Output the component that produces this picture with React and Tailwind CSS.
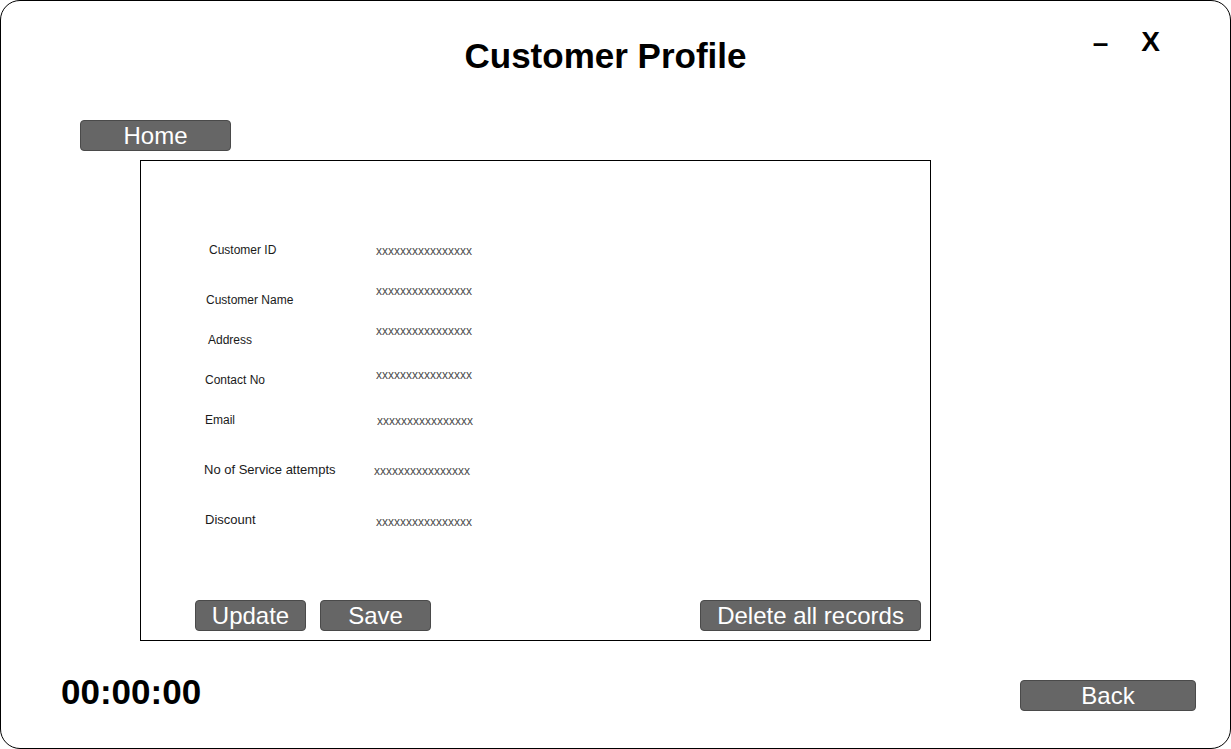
import React from 'react';

const font = { fontFamily: '"Liberation Sans", Arial, sans-serif' };

const rows = [
  { label: 'Customer ID', h: 'h-[50px]', lp: 'pl-[68px]', ls: 'text-[12px]', vp: 'pl-0', vm: 'mt-[1px]' },
  { label: 'Customer Name', h: 'h-[40px]', lp: 'pl-[65px]', ls: 'text-[12px]', vp: 'pl-0', vm: 'mt-[-9px]' },
  { label: 'Address', h: 'h-[40px]', lp: 'pl-[67px]', ls: 'text-[12px]', vp: 'pl-0', vm: 'mt-[-9px]' },
  { label: 'Contact No', h: 'h-[40px]', lp: 'pl-[64px]', ls: 'text-[12px]', vp: 'pl-0', vm: 'mt-[-5px]' },
  { label: 'Email', h: 'h-[50px]', lp: 'pl-[64px]', ls: 'text-[12px]', vp: 'pl-[1px]', vm: 'mt-[1px]' },
  { label: 'No of Service attempts', h: 'h-[50px]', lp: 'pl-[63px]', ls: 'text-[13px]', vp: 'ml-[-2px]', vm: 'mt-[1px]' },
  { label: 'Discount', h: 'h-[16px]', lp: 'pl-[64px]', ls: 'text-[13px]', vp: 'pl-0', vm: 'mt-[2px]' },
];

const GrayButton = ({ children, className = '' }) => (
  <button
    className={`h-[31px] rounded-[4px] border border-[#4a4a4a] bg-[#666666] text-[24px] leading-[29px] text-white ${className}`}
    style={font}
  >
    {children}
  </button>
);

const App = () => {
  return (
    <div className="h-[749px] w-[1231px] bg-white" style={font}>
      <div className="relative flex h-[749px] w-[1231px] flex-col rounded-[20px] border border-black">
        {/* Header */}
        <div className="flex justify-center pr-[20px] pt-[35px]">
          <h1 className="text-[35px] font-bold leading-[40px] text-black">Customer Profile</h1>
        </div>
        <div className="absolute right-[70px] top-[24px] flex items-center gap-[33px] text-[28px] font-bold leading-[32px] text-black">
          <span className="mt-[2px]">–</span>
          <span>X</span>
        </div>

        {/* Home */}
        <div className="ml-[79px] mt-[44px]">
          <GrayButton className="w-[151px]">Home</GrayButton>
        </div>

        {/* Panel */}
        <div className="ml-[139px] mt-[9px] flex h-[481px] w-[791px] flex-col border border-black">
          <div className="flex flex-col pt-[81px]">
            {rows.map((r) => (
              <div key={r.label} className={`flex items-start ${r.h}`}>
                <div className={`w-[235px] shrink-0 leading-[16px] text-[#1a1a1a] ${r.ls} ${r.lp}`}>
                  {r.label}
                </div>
                <div className={`text-[12px] leading-[16px] text-[#4d4d4d] ${r.vp} ${r.vm}`}>
                  xxxxxxxxxxxxxxxx
                </div>
              </div>
            ))}
          </div>
          <div className="mt-auto flex items-center pb-[9px] pl-[54px] pr-[9px]">
            <GrayButton className="w-[111px]">Update</GrayButton>
            <GrayButton className="ml-[14px] w-[111px]">Save</GrayButton>
            <GrayButton className="ml-auto w-[221px]">Delete all records</GrayButton>
          </div>
        </div>

        {/* Footer */}
        <div className="mt-auto flex items-end justify-between pb-[37px] pl-[60px] pr-[34px]">
          <div className="mb-[-1px] text-[35px] font-bold leading-[40px] text-black">00:00:00</div>
          <GrayButton className="w-[176px]">Back</GrayButton>
        </div>
      </div>
    </div>
  );
};

export default App;
